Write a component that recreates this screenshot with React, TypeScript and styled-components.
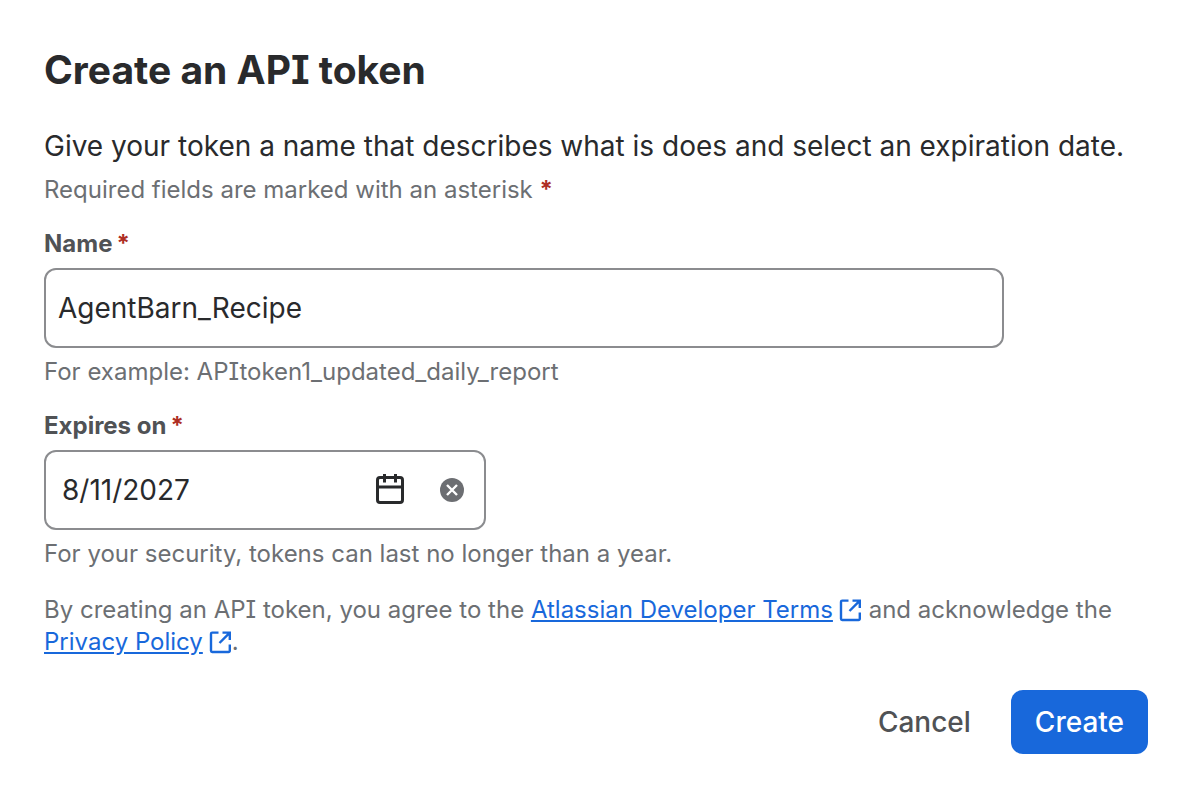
import React, { useState } from "react";
import styled, { createGlobalStyle } from "styled-components";

const GlobalStyle = createGlobalStyle`
  * { box-sizing: border-box; }
  body {
    margin: 0;
    background: #fff;
    font-family: Inter, "Liberation Sans", sans-serif;
    font-feature-settings: "cv08";
    color: #292a2c;
  }
`;

const Dialog = styled.form`
  display: flex;
  flex-direction: column;
  padding: 44px 36px 36px 44px;
`;

const Title = styled.h1`
  margin: 0;
  font-size: 39px;
  line-height: 52px;
  font-weight: 650;
`;

const Intro = styled.p`
  margin: 30px 0 0;
  font-size: 28px;
  line-height: 40px;
`;

const Note = styled.p<{ $top?: number }>`
  margin: ${(p) => p.$top ?? 8}px 0 0;
  font-size: 24px;
  line-height: 32px;
  color: #6c6f73;
`;

const Asterisk = styled.span`
  color: #ae2e24;
  font-weight: 650;
`;

const Field = styled.div`
  display: flex;
  flex-direction: column;
  margin-top: 22px;
`;

const Label = styled.label`
  display: flex;
  gap: 4px;
  font-size: 24px;
  line-height: 32px;
  font-weight: 650;
  color: #505255;
  margin-bottom: 8px;
`;

const Box = styled.div<{ $width: number; $pad: number }>`
  display: flex;
  align-items: center;
  width: 100%;
  max-width: ${(p) => p.$width}px;
  height: 80px;
  padding: 0 ${(p) => p.$pad}px;
  border: 2px solid #8b8c8f;
  border-radius: 12px;
`;

const Input = styled.input`
  flex: 1;
  min-width: 0;
  padding: 0;
  border: 0;
  outline: 0;
  background: transparent;
  font: inherit;
  font-feature-settings: inherit;
  font-size: 28px;
  line-height: 40px;
  color: #292a2c;
`;

const IconButton = styled.button`
  display: flex;
  padding: 0;
  border: 0;
  background: none;
  margin-left: 30px;
  cursor: pointer;
`;

const Link = styled.a`
  color: #1868db;
  text-decoration: underline;
  svg { margin-left: 5px; vertical-align: -4px; }
`;

const Actions = styled.div`
  display: flex;
  justify-content: flex-end;
  gap: 16px;
  margin-top: 32px;
`;

const Button = styled.button<{ $primary?: boolean }>`
  height: 64px;
  padding: 0 24px;
  border: 0;
  border-radius: 12px;
  font: inherit;
  font-size: 28px;
  font-weight: 500;
  line-height: 40px;
  color: ${(p) => (p.$primary ? "#fff" : "#505255")};
  background: ${(p) => (p.$primary ? "#1868db" : "transparent")};
  cursor: pointer;
`;

const CalendarIcon = () => (
  <svg width="32" height="32" viewBox="0 0 32 32" fill="none" stroke="#292a2c" strokeWidth="3" aria-hidden="true">
    <rect x="3.5" y="3.500" width="25" height="25" rx="2.5" />
    <path d="M3.5 13h25M10.500 0v8.500M21.500 0v8.500" />
  </svg>
);

const ClearIcon = () => (
  <svg width="32" height="32" viewBox="0 0 32 32" aria-hidden="true">
    <circle cx="16" cy="16" r="12" fill="#6c6e72" />
    <path d="M11 11l10 10M21 11l-10 10" stroke="#fff" strokeWidth="2.4" />
  </svg>
);

const ExternalIcon = () => (
  <svg width="24" height="24" viewBox="0 0 24 24" fill="none" stroke="currentColor" strokeWidth="2.4" role="img" aria-label="opens new window">
    <path d="M10.5 2.6H4.2A1.2 1.2 0 0 0 3 3.800V20.800a1.200 1.200 0 0 0 1.200 1.200H20.600a1.200 1.200 0 0 0 1.200-1.200V14.500M14.500 2.600H21.800V10M21.800 2.600L11.500 13" />
  </svg>
);

export default function App() {
  const [name, setName] = useState("AgentBarn_Recipe");
  const [date, setDate] = useState("8/11/2027");
  return (
    <>
      <GlobalStyle />
      <Dialog onSubmit={(e) => e.preventDefault()}>
        <Title>Create an API token</Title>
        <Intro>Give your token a name that describes what is does and select an expiration date.</Intro>
        <Note>Required fields are marked with an asterisk <Asterisk>*</Asterisk></Note>
        <Field>
          <Label htmlFor="name">Name<Asterisk>*</Asterisk></Label>
          <Box $width={960} $pad={12}>
            <Input id="name" value={name} onChange={(e) => setName(e.target.value)} />
          </Box>
          <Note>For example: APItoken1_updated_daily_report</Note>
        </Field>
        <Field>
          <Label htmlFor="expires">Expires on<Asterisk>*</Asterisk></Label>
          <Box $width={442} $pad={16}>
            <Input id="expires" value={date} onChange={(e) => setDate(e.target.value)} />
            <IconButton type="button" aria-label="Open calendar"><CalendarIcon /></IconButton>
            <IconButton type="button" aria-label="Clear date" onClick={() => setDate("")}><ClearIcon /></IconButton>
          </Box>
          <Note>For your security, tokens can last no longer than a year.</Note>
        </Field>
        <Note $top={24}>
          By creating an API token, you agree to the <Link href="#terms">Atlassian Developer Terms<ExternalIcon /></Link> and acknowledge the{" "}
          <Link href="#privacy">Privacy Policy<ExternalIcon /></Link>.
        </Note>
        <Actions>
          <Button type="button">Cancel</Button>
          <Button type="submit" $primary>Create</Button>
        </Actions>
      </Dialog>
    </>
  );
}
